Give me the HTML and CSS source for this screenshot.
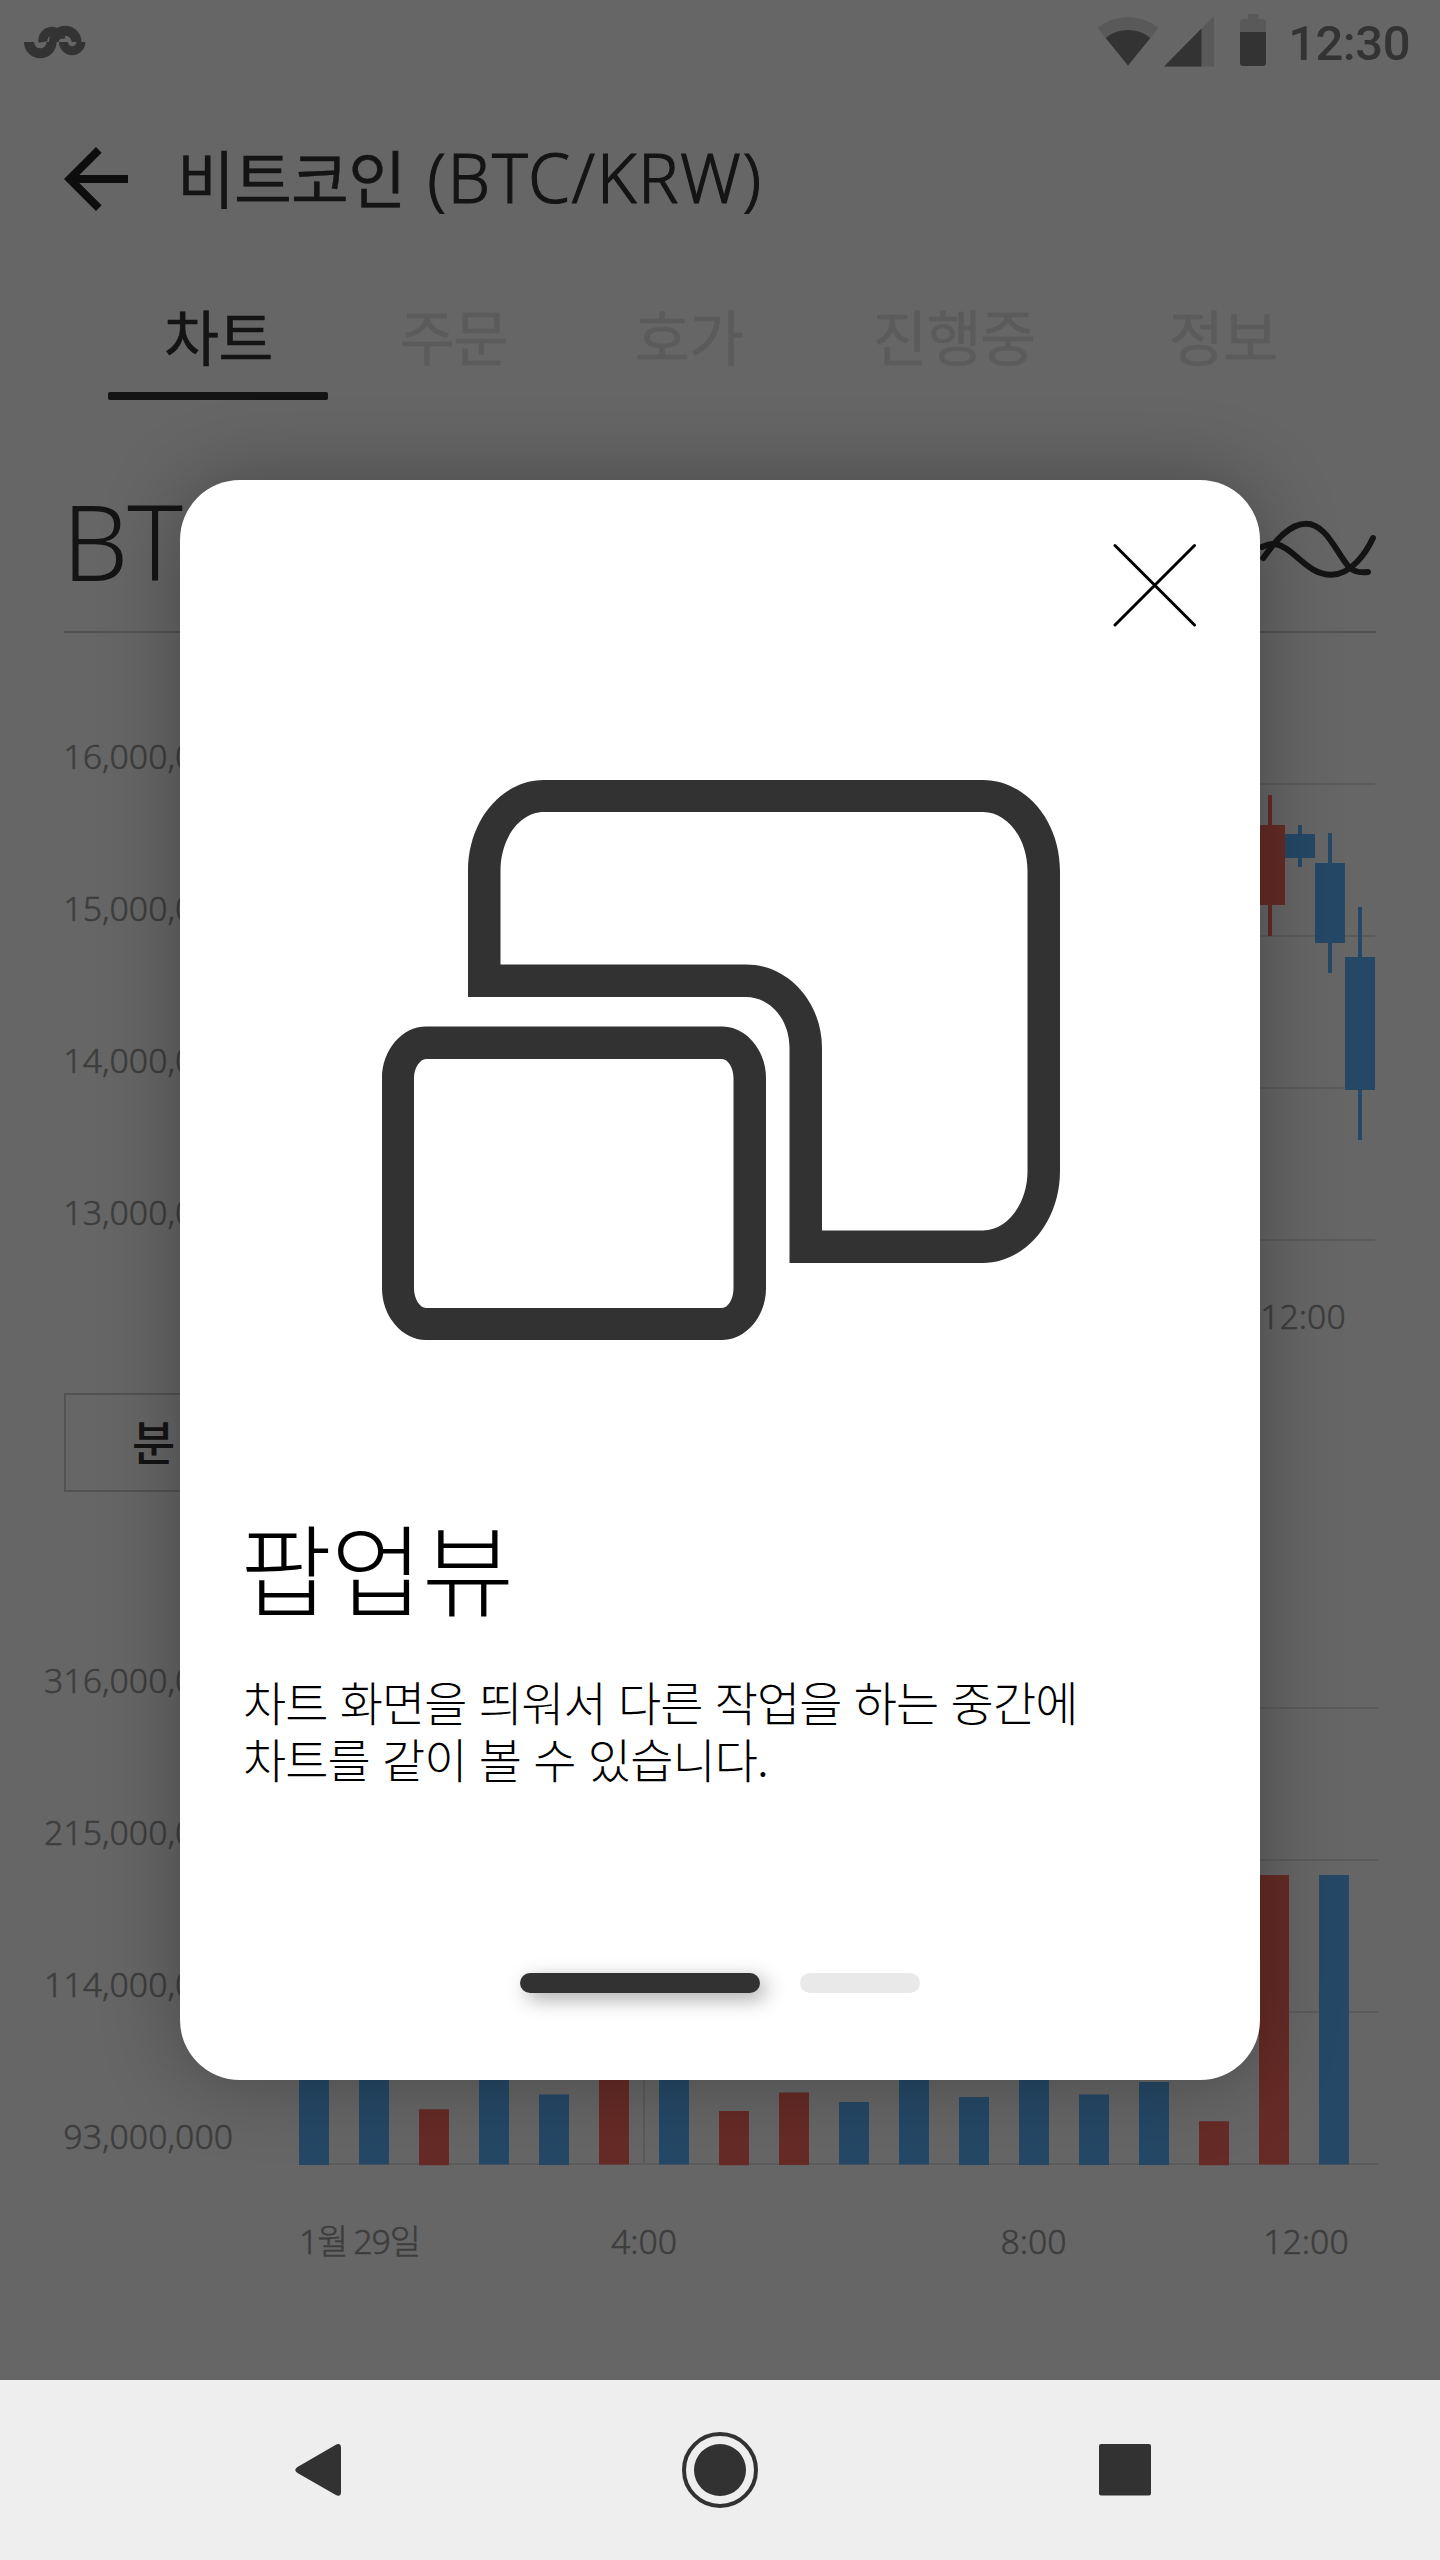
FILE: index.html
```html
<!DOCTYPE html>
<html lang="ko">
<head>
<meta charset="utf-8">
<title>비트코인 (BTC/KRW)</title>
<link rel="stylesheet" href="styles.css">
</head>
<body>
<div class="phone">
  <div class="app">
    <header class="status">
      <svg class="status-logo" width="64" height="36" viewBox="22 24 64 36" fill="none" stroke="currentColor">
        <path d="M29 42a11 11 0 0 0 22.600 0" stroke-width="10"/>
        <path d="M43 42a9 9 0 0 1 18 -3" stroke-width="9"/>
        <path d="M54 42a11 11 0 0 1 22.500 0" stroke-width="10"/>
        <path d="M63.500 42a8.700 8.700 0 0 0 17.400 0" stroke-width="9"/>
      </svg>
      <div class="status-right">
        <svg class="wifi" width="62" height="52" viewBox="0 0 62 52">
          <path class="faint" d="M31 48.500L.4 10.800Q13 .2 31 .2T61.600 10.800Z"/>
          <path d="M31 48.500L8.700 21Q18 13 31 13T53.300 21Z"/>
        </svg>
        <svg class="signal" width="50" height="52" viewBox="0 0 50 52">
          <path class="faint" d="M0 50.500L50 0V50.500Z"/>
          <path d="M0 50.500L37.500 12.500V50.500Z"/>
        </svg>
        <svg class="battery" width="26" height="54" viewBox="0 0 26 54">
          <path class="faint" d="M8 0H18.500V5H23a3 3 0 0 1 3 3V20H0V8a3 3 0 0 1 3-3H8Z"/>
          <path d="M0 18H26V49a3 3 0 0 1-3 3H3a3 3 0 0 1-3-3Z"/>
        </svg>
        <span class="clock">12:30</span>
      </div>
    </header>

    <div class="appbar">
      <svg class="back" width="64" height="64" viewBox="4 4 16 16"><path d="M20 11H7.830l5.590-5.590L12 4l-8 8 8 8 1.410-1.410L7.830 13H20v-2z"/></svg>
      <h1 class="title"><span class="ko">비트코인</span><span class="en">(BTC/KRW)</span></h1>
    </div>

    <nav class="tabs">
      <a class="tab active">차트</a>
      <a class="tab">주문</a>
      <a class="tab">호가</a>
      <a class="tab wide">진행중</a>
      <a class="tab">정보</a>
    </nav>

    <div class="ticker">
      <span class="symbol">BTC</span>
      <svg class="wave" width="120" height="60" viewBox="0 0 120 60" fill="none" stroke="currentColor" stroke-width="6" stroke-linecap="round">
        <path d="M7.300 38C20 20 34 3.700 50 3.700C70 3.700 80 32 93 47C98 52 105 53 112 52"/>
        <path d="M6 27C12 24 15 23.500 19 24C38 27 50 54.700 75.500 54.700C95 54.700 110 33 117 18"/>
      </svg>
    </div>

    <section class="chart price">
      <div class="y-labels"><span>16,000,000</span><span>15,000,000</span><span>14,000,000</span><span>13,000,000</span></div>
      <svg class="plot" width="1080" height="460" viewBox="299 782 1080 460">
        <path class="grid" d="M299 784H1375M299 936H1375M299 1088H1375M299 1240H1375"/>
        <path class="up" d="M1255 825h13v-30h4v30h13v80h-13v31h-4v-31h-13z"/>
        <path class="down" d="M1285 834h13v-9h4v9h13v24h-13v9h-4v-9h-13z"/>
        <path class="down" d="M1315 863h13v-30h4v30h13v80h-13v30h-4v-30h-13z"/>
        <path class="down" d="M1345 957h13v-50h4v50h13v133h-13v50h-4v-50h-13z"/>
      </svg>
      <div class="x-labels"><span class="day">1월 29일</span><span>4:00</span><span>8:00</span><span>12:00</span></div>
    </section>

    <div class="interval"><button class="select">분</button></div>

    <section class="chart volume">
      <div class="y-labels"><span>316,000,000</span><span>215,000,000</span><span>114,000,000</span><span>93,000,000</span></div>
      <svg class="plot" width="1080" height="460" viewBox="299 1706 1080 460">
        <path class="grid" d="M299 1708H1378M299 1860H1378M299 2012H1378M299 2164H1378M644 1708V2164"/>
        <path class="down" d="M299 2040h30v125h-30zM359 2040h30v124.500h-30zM479 2040h30v124.500h-30zM539 2094.500h30v70.500h-30zM659 2040h30v124.500h-30zM839 2102h30v62.500h-30zM899 2040h30v124.500h-30zM959 2097h30v68h-30zM1019 2040h30v125h-30zM1079 2094.500h30v70.500h-30zM1139 2082h30v83h-30zM1319 1875h30v289.500h-30z"/>
        <path class="up" d="M419 2109.300h30v56h-30zM599 2040h30v124.500h-30zM719 2111h30v54.300h-30zM779 2092.500h30v72.500h-30zM1199 2121.300h30v44h-30zM1259 1875h30v289.500h-30z"/>
      </svg>
      <div class="x-labels"><span class="day">1월 29일</span><span>4:00</span><span>8:00</span><span>12:00</span></div>
    </section>
  </div>

  <div class="overlay">
    <div class="modal">
      <svg class="close" width="84" height="84" viewBox="0 0 84 84" stroke="#000" stroke-width="3" stroke-linecap="round"><path d="M2 2.500L81.500 82M81.500 2.500L2 82"/></svg>
      <svg class="art" width="678" height="560" viewBox="382 780 678 560">
        <path fill-rule="evenodd" d="M544 780H983C1025 780 1060 820 1060 871V1171C1060 1222 1025 1263 983 1263H789.500V1048C789.500 1019 770 997 746 997H468V871C468 820 502 780 544 780ZM544 812C520 812 500.500 838 500.500 871V964.500H746C788 964.500 822 1002 822 1048V1230.500H983C1007 1230.500 1027.500 1204 1027.500 1171V871C1027.500 838 1007 812 983 812Z"/>
        <path fill-rule="evenodd" d="M426 1026.500H722C746 1026.500 766 1050 766 1078V1288.500C766 1316 746 1340 722 1340H426C402 1340 382 1316 382 1288.500V1078C382 1050 402 1026.500 426 1026.500ZM426 1059C420 1059 414 1068 414 1078V1288.500C414 1299 420 1308 426 1308H722C728 1308 733.500 1299 733.500 1288.500V1078C733.500 1068 728 1059 722 1059Z"/>
      </svg>
      <h2 class="heading">팝업뷰</h2>
      <p class="body">차트 화면을 띄워서 다른 작업을 하는 중간에<br>차트를 같이 볼 수 있습니다.</p>
      <div class="pager"><i class="dot current"></i><i class="dot"></i></div>
    </div>
  </div>

  <footer class="navbar">
    <svg width="46" height="52" viewBox="0 0 46 52"><path d="M40 1.200Q46 -2 46 4V48Q46 54 40 50.500L2.500 29Q-2 26 2.500 23Z"/></svg>
    <svg width="76" height="76" viewBox="0 0 76 76"><circle cx="38" cy="38" r="36" fill="none" stroke="#323232" stroke-width="4"/><circle cx="38" cy="38" r="26"/></svg>
    <svg width="52" height="52" viewBox="0 0 52 52"><rect width="52" height="51.500" rx="2"/></svg>
  </footer>
</div>
</body>
</html>
```
FILE: styles.css
```css
* { box-sizing: border-box; }
body, h1, h2, p { margin: 0; }
body {
  font-family: "Noto Sans", "Noto Sans CJK KR", sans-serif;
  font-weight: 300;
}
svg { display: block; flex: none; }
.phone {
  position: relative;
  width: 1440px;
  height: 2560px;
  overflow: hidden;
  background: #fff;
  color: #333;
  display: flex;
  flex-direction: column;
}
.app { height: 2380px; }

/* status bar */
.status {
  height: 84px;
  padding: 0 30px 0 22px;
  display: flex;
  justify-content: space-between;
  color: #808080;
}
.status-logo { margin-top: 24px; }
.status-right { display: flex; align-items: flex-start; fill: #808080; }
.status-right .faint { fill: #dedede; }
.wifi { margin: 17px 5px 0 0; }
.signal { margin: 15.500px 26px 0 0; }
.battery { margin: 14px 22px 0 0; }
.clock { font: 500 49px/60px Roboto, sans-serif; margin-top: 14px; letter-spacing: -.5px; }

/* title */
.appbar {
  height: 190px;
  padding: 0 64px;
  display: flex;
  align-items: center;
}
.back { fill: #212121; }
.title {
  margin: -5px 0 0 49px;
  display: flex;
  align-items: baseline;
  gap: 22px;
  font-weight: 400;
  line-height: 90px;
  white-space: nowrap;
}
.title .ko { font: 400 63px/90px "Noto Sans CJK KR", sans-serif; letter-spacing: -.9px; -webkit-text-stroke: .4px; }
.title .en { font: 300 67.500px/90px "Noto Sans", sans-serif; letter-spacing: 1.6px; -webkit-text-stroke: 1.1px; }

.tabs {
  height: 126px;
  padding-left: 108px;
  display: flex;
  align-items: flex-end;
  gap: 15px;
  font: 400 60px/82px "Noto Sans CJK KR", sans-serif;
  letter-spacing: -1px;
  -webkit-text-stroke: .5px;
}
.tab {
  height: 106px;
  padding: 0 56px;
  color: #e3e3e3;
  position: relative;
}
.tab.wide { margin: 0 7px 0 2px; }
.tab.active { color: #333; }
.tab.active::after {
  content: "";
  position: absolute;
  left: 0;
  right: 0;
  bottom: 0;
  height: 8px;
  border-radius: 2px;
  background: #333;
}

.ticker {
  height: 233px;
  margin: 0 64px;
  border-bottom: 2px solid #ccc;
  display: flex;
  justify-content: space-between;
  align-items: flex-start;
}
.symbol { font-size: 105px; line-height: 140px; margin: 71px 0 0 -2px; letter-spacing: -1px; }
.wave { margin-top: 120px; color: #333; }

/* charts */
.chart {
  display: grid;
  grid-template-columns: 233px 1080px;
  column-gap: 66px;
  color: #999;
  font-size: 33.800px;
  font-weight: 300;
  -webkit-text-stroke: .5px;
}
.price { padding-top: 97px; height: 760px; grid-template-rows: 556px 60px; }
.volume { padding-top: 162px; grid-template-rows: 557px 60px; }
.y-labels { display: flex; flex-direction: column; text-align: right; }
.y-labels span { flex: none; height: 152px; line-height: 52px; }
.plot { margin-top: 52px; }
.grid { stroke: #e3e3e3; stroke-width: 2; }
.up { fill: #ff6c60; }
.down { fill: #5cb4ff; }
.x-labels {
  grid-column: 2;
  display: grid;
  grid-template-columns: 150px 390px 389px 156px;
  line-height: 60px;
  text-align: center;
  white-space: nowrap;
}
.price .x-labels { margin-left: -3px; }
.x-labels .day { text-align: left; letter-spacing: -1px; word-spacing: -2px; }
.interval { padding-left: 64px; height: 99px; }
.select {
  display: block;
  width: 220px;
  height: 99px;
  border: 2px solid #ccc;
  background: none;
  padding: 0 0 5px 66px;
  text-align: left;
  color: #333;
  font: 500 47px/86px "Noto Sans CJK KR", sans-serif;
}

/* coach-mark dialog */
.overlay {
  position: absolute;
  left: 0;
  top: 0;
  width: 1440px;
  height: 2380px;
  background: rgba(0, 0, 0, .6);
  padding: 480px 180px 0;
}
.modal {
  height: 1600px;
  border-radius: 60px;
  background: #fff;
  box-shadow: 0 0 80px rgba(0, 0, 0, .3);
  color: #000;
  padding: 63px 63px 0;
  display: flex;
  flex-direction: column;
}
.close { align-self: flex-end; }
.art { margin: 153px 0 0 139px; fill: #323232; }
.heading {
  margin: 156px 0 0 -3px;
  font: 300 100px/140px "Noto Sans CJK KR", sans-serif;
  letter-spacing: -1px;
}
.body {
  margin-top: 36px;
  font: 300 47px/57px "Noto Sans CJK KR", sans-serif;
  letter-spacing: -.95px;
  white-space: nowrap;
}
.pager { display: flex; gap: 40px; margin: 187px 0 0 277px; }
.dot { width: 120px; height: 20px; border-radius: 10px; background: #e9e9e9; }
.dot.current { width: 240px; background: #323232; box-shadow: 6px 6px 20px rgba(0, 0, 0, .35); }

.navbar {
  height: 180px;
  background: #eee;
  padding: 0 289px 0 295px;
  display: flex;
  align-items: center;
  justify-content: space-between;
  fill: #323232;
}
```
